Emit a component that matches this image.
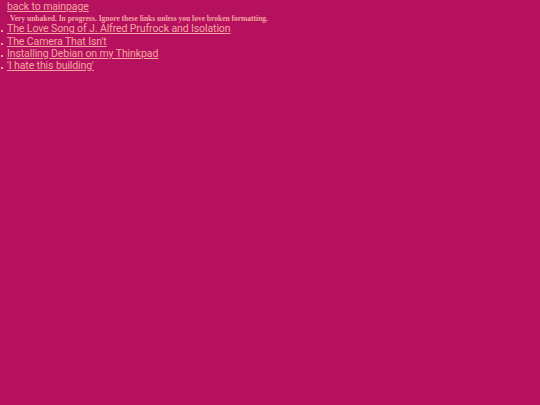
export default function App() {
  const posts = [
    "The Love Song of J. Alfred Prufrock and Isolation",
    "The Camera That Isn't",
    "Installing Debian on my Thinkpad",
    "'I hate this building'",
  ];

  return (
    <div className="min-h-screen w-full bg-[#b5115f] text-[#f6a5a0] px-[7px] pt-[1px] font-['Roboto',sans-serif] text-[10.5px] tracking-[-0.1px] leading-[12.3px]">
      <a href="#" className="underline">
        back to mainpage
      </a>
      <p className="pl-[3px] pt-[1px] font-['Liberation_Serif',serif] text-[7.5px] tracking-normal leading-[9px] font-bold">
        Very unbaked. In progress. Ignore these links unless you love broken formatting.
      </p>
      <ul>
        {posts.map((p) => (
          <li key={p} className="relative">
            <span className="absolute left-[-6px] top-[7px] w-[2px] h-[2px] bg-[#f6a5a0]" />
            <a href="#" className="underline">
              {p}
            </a>
          </li>
        ))}
      </ul>
    </div>
  );
}
